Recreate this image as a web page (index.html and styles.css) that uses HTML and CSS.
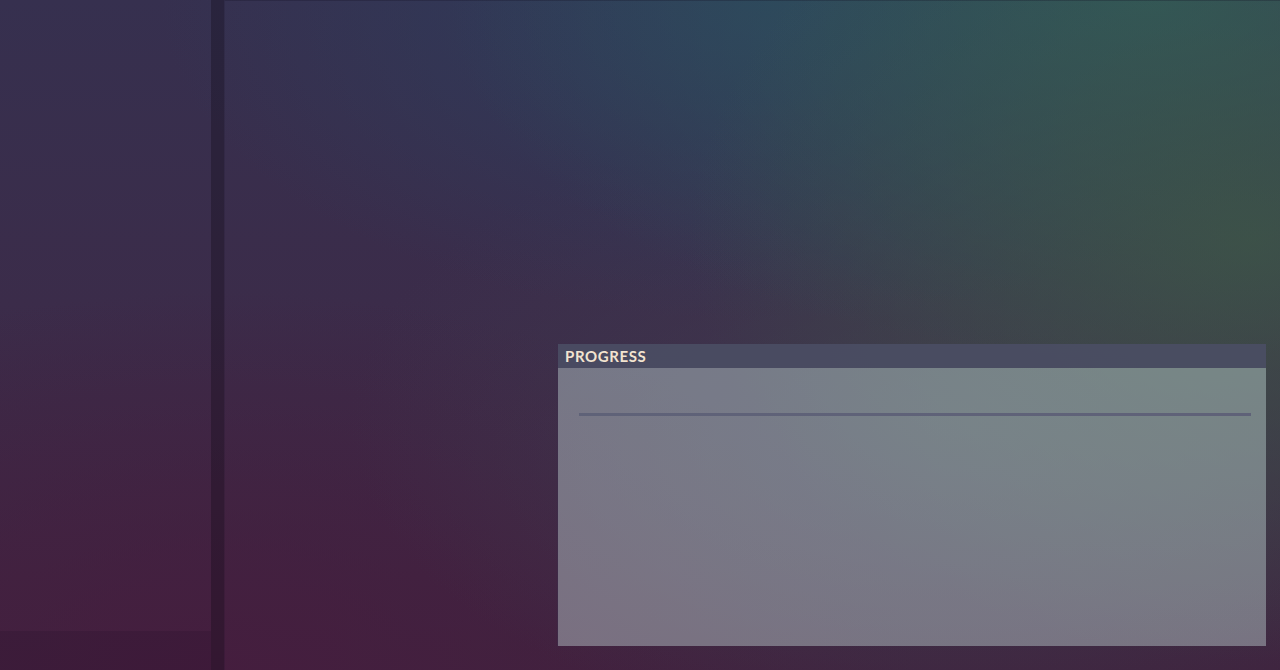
FILE: index.html
```html
<!DOCTYPE html>
<html lang="en">
<head>
<meta charset="utf-8">
<title>Progress</title>
<link rel="stylesheet" href="styles.css">
</head>
<body>
<div class="app">
  <aside class="sidebar">
    <div class="sidebar-body"></div>
    <div class="sidebar-footer"></div>
  </aside>
  <div class="divider"></div>
  <main class="main">
    <section class="panel">
      <header class="panel-header">PROGRESS</header>
      <div class="panel-body">
        <div class="progress-track"></div>
      </div>
    </section>
  </main>
</div>
</body>
</html>
```

FILE: styles.css
```css
html, body {
  margin: 0;
  padding: 0;
  height: 100%;
  overflow: hidden;
}

body {
  font-family: "Lato", "Open Sans", sans-serif;
  background-color: #3b2d4a;
  background-image:
    radial-gradient(ellipse 560px 420px at 1250px 240px, rgba(62, 88, 70, 0.75), rgba(62, 88, 70, 0) 100%),
    radial-gradient(ellipse 700px 360px at 1150px 0px, rgba(46, 90, 92, 0.9), rgba(46, 90, 92, 0) 100%),
    radial-gradient(ellipse 600px 320px at 760px 0px, rgba(44, 64, 94, 0.85), rgba(44, 64, 94, 0) 100%),
    radial-gradient(ellipse 600px 320px at 950px 420px, rgba(64, 62, 80, 0.75), rgba(64, 62, 80, 0) 100%),
    radial-gradient(ellipse 700px 380px at 220px 670px, rgba(70, 28, 62, 0.8), rgba(70, 28, 62, 0) 100%),
    linear-gradient(180deg, #36304f 0%, #3b2c4a 45%, #3f243f 100%);
}

.app {
  display: flex;
  height: 670px;
  width: 1280px;
}

.sidebar {
  width: 211px;
  flex: none;
  display: flex;
  flex-direction: column;
}

.sidebar-body {
  flex: 1;
}

.sidebar-footer {
  height: 39px;
  background: rgba(20, 5, 25, 0.14);
}

.divider {
  width: 13px;
  flex: none;
  background: rgba(15, 8, 22, 0.32);
}

.main {
  flex: 1;
  display: flex;
  flex-direction: column;
  justify-content: flex-end;
  align-items: flex-end;
  padding: 0 14px 24px 0;
  border-top: 1px solid rgba(20, 15, 35, 0.25);
  border-left: 1px solid rgba(20, 15, 35, 0.15);
  box-sizing: border-box;
}

.panel {
  width: 709px;
  height: 302px;
  display: flex;
  flex-direction: column;
  border-left: 1px solid rgba(60, 45, 75, 0.5);
  box-sizing: border-box;
}

.panel-header {
  height: 24px;
  flex: none;
  background: rgba(74, 78, 100, 0.9);
  color: #f3e4d0;
  font-weight: 700;
  font-size: 15px;
  line-height: 24px;
  padding-left: 7px;
  letter-spacing: 0.6px;
}

.panel-body {
  flex: 1;
  background: rgba(222, 250, 245, 0.36);
  padding: 45px 15px 0 21px;
}

.progress-track {
  height: 3px;
  background: #5f6278;
}
```
